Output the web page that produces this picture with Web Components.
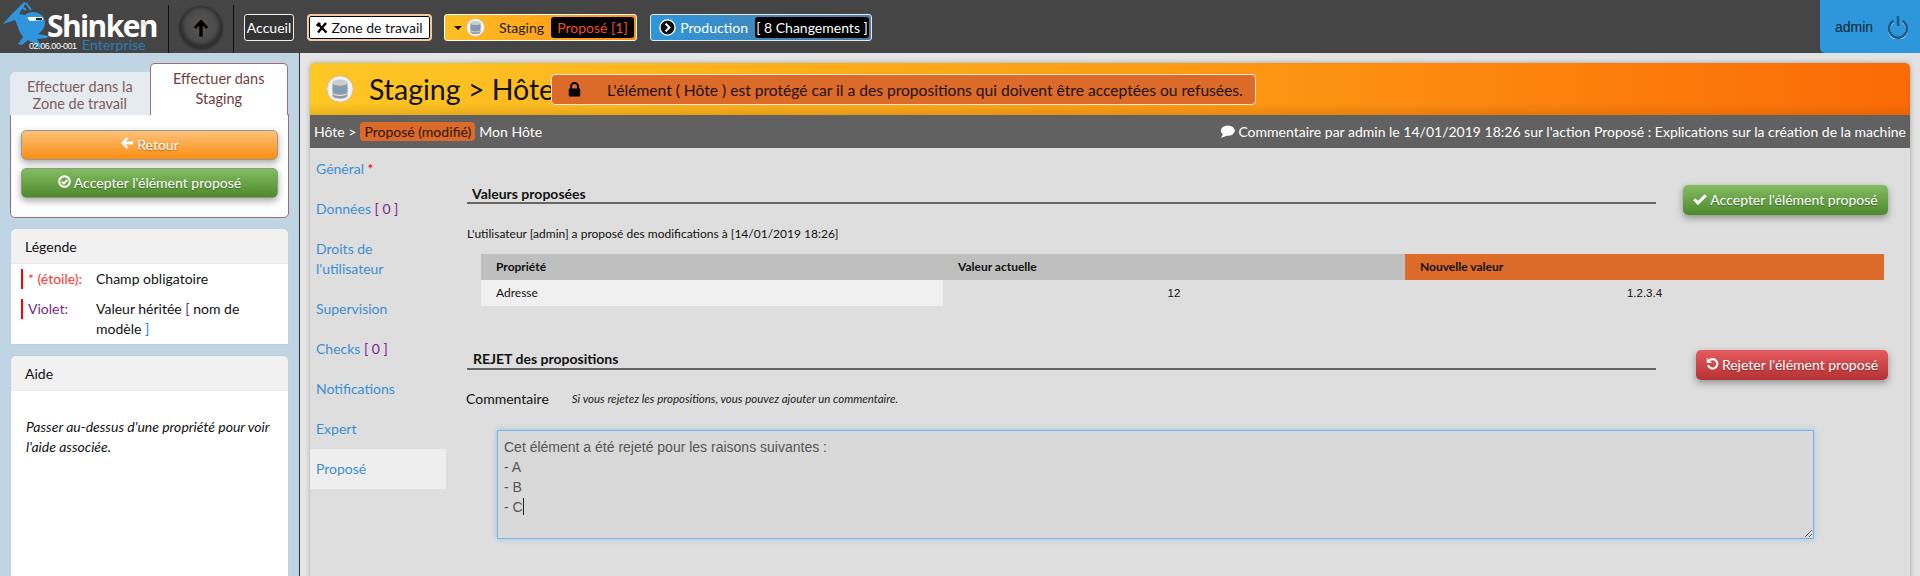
<!DOCTYPE html>
<html lang="fr">
<head>
<meta charset="utf-8">
<title>Shinken</title>
<style>
html,body{margin:0;padding:0;height:576px;overflow:hidden;background:#e2e2e2;font-family:Lato,"Liberation Sans",sans-serif;font-size:14px;color:#111}
sk-app{height:576px}
</style>
</head>
<body>
<sk-app>
  <sk-topbar slot="top"></sk-topbar>
  <sk-sidebar slot="side"></sk-sidebar>
  <sk-main slot="main"></sk-main>
</sk-app>
<script>
function def(name, css, html){
  customElements.define(name, class extends HTMLElement{
    constructor(){super();this.attachShadow({mode:'open'}).innerHTML='<style>'+css+'</style>'+html;}
  });
}
const ICONS={
 left:'<svg width="14" height="14" viewBox="0 0 14 14"><path d="M6.6 1.2 1 7l5.6 5.8 1.6-1.6L5.5 8.5H13v-3H5.5l2.7-2.7z" fill="currentColor"/></svg>',
 ccheck:'<svg width="13" height="13" viewBox="0 0 13 13"><circle cx="6.5" cy="6.5" r="5.3" fill="none" stroke="currentColor" stroke-width="2"/><path d="M3.8 6.6 5.9 8.6 9.3 4.8" fill="none" stroke="currentColor" stroke-width="1.9"/></svg>',
 check:'<svg width="14" height="12" viewBox="0 0 14 12"><path d="M1.2 6.3 5 10 12.8 2.2" fill="none" stroke="currentColor" stroke-width="3"/></svg>',
 undo:'<svg width="13" height="13" viewBox="0 0 13 13"><path d="M3.4 3.3A4.7 4.7 0 1 1 2 8" fill="none" stroke="currentColor" stroke-width="2.1"/><path d="M.8 .8V6H6z" fill="currentColor"/></svg>',
 comment:'<svg width="15" height="13" viewBox="0 0 15 13"><ellipse cx="7.8" cy="5.6" rx="7" ry="5.2" fill="currentColor"/><path d="M3.4 8.6 1 12.6C3.4 12.4 5.6 11.4 7 10.2z" fill="currentColor"/></svg>',
 lock:'<svg width="13" height="15" viewBox="0 0 13 15"><path d="M3 7V4.4a3.5 3.5 0 0 1 7 0V7" fill="none" stroke="#000" stroke-width="2"/><rect x=".8" y="6.6" width="11.4" height="8" rx="1" fill="#000"/></svg>',
 db:s=>`<svg width="${s}" height="${s}" viewBox="0 0 30 30"><circle cx="15" cy="15" r="14.2" fill="#f2f2f2" stroke="#d8b78a" stroke-width="1"/><ellipse cx="15" cy="8" rx="8" ry="3.2" fill="#c9ced2"/><path d="M7 8v14c0 2 3.6 3.4 8 3.4s8-1.4 8-3.4V8c0 2-3.6 3.2-8 3.2S7 10 7 8z" fill="#8f9aa3"/><path d="M7 12.6c0 2 3.6 3.2 8 3.2s8-1.2 8-3.2v1.6c0 2-3.6 3.2-8 3.2s-8-1.2-8-3.2z" fill="#5aa3d8"/><path d="M7 18c0 2 3.6 3.2 8 3.2s8-1.2 8-3.2v1.4c0 2-3.6 3.2-8 3.2s-8-1.2-8-3.2z" fill="#dde3e8"/></svg>`
};

def('sk-app',`:host{display:grid;grid-template-columns:300px 1fr;grid-template-rows:53px 523px;width:1920px;overflow:hidden}
 ::slotted([slot=top]){grid-column:1 / 3}`,
 `<slot name="top"></slot><slot name="side"></slot><slot name="main"></slot>`);

def('sk-logo',`:host{display:block;position:relative;width:168px;height:53px;flex:none;color:#fff}
 svg{position:absolute;left:2px;top:1px}
 .n{position:absolute;left:47px;top:8px;font:700 30px/36px "Open Sans","Liberation Sans",sans-serif;letter-spacing:-1.6px}
 .tm{position:absolute;left:140px;top:20px;font:5px/8px "Liberation Sans",sans-serif;color:#bbb}
 .v{position:absolute;left:29px;top:41px;font:9px/11px "Liberation Sans",sans-serif;letter-spacing:-.45px}
 .e{position:absolute;left:82px;top:37px;font:14px/15px Lato,sans-serif;color:#2a7cb5;letter-spacing:.1px}`,
 `<svg width="56" height="50" viewBox="0 0 56 50"><path d="M22 1 9 14 1 23l12-4 3 7c1 5 4 8 5 10l-5 7 4 1 6-5 5 3 6 5 3-1-5-8 10-1 1-2-10-2c3-2 7-6 7-11 0-7-6-11-12-11-3 0-6 1-8 3L17 13 24 2z" fill="#2f96dd"/><path d="M26 16h13c2 0 3 2 2 3l-12 1c-2 0-4-3-3-4z" fill="#fff"/><path d="M34 17h6v2h-6z" fill="#123"/><path d="M19 5l5 4M24 2l5 7" stroke="#2f96dd" stroke-width="2"/></svg>
 <span class="n">Shinken</span><span class="tm">TM</span><span class="v">02.06.00-001</span><span class="e">Enterprise</span>`);

def('sk-up',`:host{display:flex;align-items:center;justify-content:center;flex:none;width:66px;height:48px;margin-top:5px;border:solid #111;border-width:0 1px;box-sizing:border-box}
 i{display:flex;align-items:center;justify-content:center;width:44px;height:44px;margin-top:-3px;border-radius:50%;background:radial-gradient(circle at 50% 45%,#585858 0,#4a4a4a 48%,#2f2f2f 62%,#3a3a3a 100%);box-shadow:0 0 2px #333}`,
 `<i><svg width="20" height="22" viewBox="0 0 20 22"><path d="M10 2 2.5 10 5 12.3 8 9v11h4V9l3 3.3 2.5-2.3z" fill="#000" stroke="#6b5a4a" stroke-width=".5"/></svg></i>`);

def('sk-nav-pill',`:host{display:flex;align-items:center;box-sizing:border-box;height:27px;flex:none;font:14px/20px Lato,sans-serif;border-radius:3px;border:1px solid #eee}
 :host([kind=home]){width:50px;justify-content:center;background:#333;color:#fff;margin-left:10px}
 :host([kind=zone]){width:125px;margin-left:13px;justify-content:center;gap:3px;background:#fff;color:#111;border:2px solid #f5c99e;box-shadow:inset 0 0 0 1px #000;border-radius:4px}
 :host([kind=stag]){width:193px;margin-left:12px;background:linear-gradient(90deg,#fdc024,#ff8c10);color:#222;border-color:#fff;padding:2px;justify-content:flex-end}
 :host([kind=prod]){width:222px;margin-left:13px;background:linear-gradient(90deg,#2f96da,#4d7ca2);color:#fff;border-color:#e8e8e8;padding:2px;justify-content:flex-end}`,
 `<slot></slot>`);

def('sk-blackbox',`:host{display:flex;align-items:center;justify-content:center;height:100%;background:#000;border-radius:3px;box-sizing:border-box;font:14px/20px Lato,sans-serif}`,`<slot></slot>`);

def('sk-user',`:host{display:flex;align-items:center;box-sizing:border-box;width:100px;height:53px;margin-left:auto;padding-left:15px;gap:14px;background:#2e96da;border-bottom-left-radius:5px;font:14px/20px "Liberation Sans",sans-serif;color:#0d2638}`,
 `<span>admin</span><svg width="22" height="24" viewBox="0 0 22 24"><path d="M6.5 6A9 9 0 1 0 15.5 6" fill="none" stroke="#a9d4ef" stroke-width="2.4" transform="translate(0 1)"/><path d="M6.5 6A9 9 0 1 0 15.5 6" fill="none" stroke="#1d5a86" stroke-width="2.4"/><path d="M11 1v10" stroke="#1d5a86" stroke-width="2.4"/></svg>`);

def('sk-topbar',`:host{display:flex;align-items:flex-start;height:53px;background:#454545}
 .row{display:flex;align-items:center;height:27px;margin-top:14px}
 .caret{width:0;height:0;border:4px solid transparent;border-top-color:#111;border-bottom:0;margin:0 4px 0 0}
 .lab{margin:0 0 0 0}`,
 `<sk-logo></sk-logo><sk-up></sk-up>
 <div class="row">
  <sk-nav-pill kind="home">Accueil</sk-nav-pill>
  <sk-nav-pill kind="zone"><svg width="12" height="12" viewBox="0 0 12 12"><path d="M1.5 1.5 10.5 10.5M10 1 2 10.5" stroke="#000" stroke-width="2.4"/><path d="M0 3l3-3 2 2-3 3z" fill="#000"/></svg><span>Zone de travail</span></sk-nav-pill>
  <sk-nav-pill kind="stag"><span class="caret"></span><span style="display:flex;margin-right:14px">${ICONS.db(19)}</span><span style="margin-right:7px">Staging</span><sk-blackbox style="width:83px;color:#f0501e">Proposé [1]</sk-blackbox></sk-nav-pill>
  <sk-nav-pill kind="prod"><svg width="17" height="17" viewBox="0 0 17 17" style="margin-right:4px"><circle cx="8.5" cy="8.5" r="7.6" fill="#111" stroke="#fff" stroke-width="1.4"/><path d="M6.6 4.6 10.4 8.5 6.6 12.4" fill="none" stroke="#fff" stroke-width="2"/></svg><span style="margin-right:7px">Production</span><sk-blackbox style="width:114px;color:#fff">[ 8 Changements ]</sk-blackbox></sk-nav-pill>
 </div>
 <sk-user></sk-user>`);

def('sk-btn',`:host{display:flex;align-items:center;justify-content:center;gap:3px;box-sizing:border-box;height:30px;border-radius:5px;font:14px/20px Lato,sans-serif;color:#fff;text-shadow:0 1px 1px rgba(0,0,0,.35);box-shadow:0 3px 7px rgba(0,0,0,.35)}
 :host([c=orange]){background:linear-gradient(#fcc27a,#fb8e12);border:1px solid #999}
 :host([c=green]){background:linear-gradient(#84bc62,#4e892d);border:1px solid #8a9a80}
 :host([c=greenb]){background:linear-gradient(#84bc62,#4e892d)}
 :host([c=red]){background:linear-gradient(#e65c5f,#b33133)}
 span{display:flex}`,
 `<span><slot name="i"></slot></span><slot></slot>`);

def('sk-card',`:host{display:block;background:#fff;border-radius:5px 5px 0 0;box-shadow:0 0 1px rgba(0,0,0,.25);margin-left:11px;width:277px;font:14px/20px Lato,sans-serif;color:#111}
 header{height:35px;line-height:35px;padding-left:14px;background:#f1f1f1;border-radius:5px 5px 0 0;border-bottom:1px solid #eaeaea;box-sizing:border-box;font-size:14px}`,
 `<header><slot name="t"></slot></header><slot></slot>`);

def('sk-legend-row',`:host{display:grid;grid-template-columns:75px 1fr;margin-left:10px;padding-left:0;font:14px/20px Lato,sans-serif}
 .k{display:block;border-left:2px solid #f00;padding-left:5px;height:20px;color:var(--c)}
 .v{padding-right:10px}`,
 `<div class="k"><slot name="k"></slot></div><div class="v"><slot></slot></div>`);

def('sk-sidebar',`:host{display:block;box-sizing:border-box;width:300px;height:523px;background:#c0d5e3;border-right:1px solid #333;padding-top:10px;overflow:hidden}
 .tabs{display:flex;align-items:flex-end;margin-left:10px;width:278px;height:52px;position:relative;z-index:1}
 .t{box-sizing:border-box;text-align:center;font:14.5px/17px Lato,sans-serif}
 .t0{width:140px;height:43px;background:#e6ebef;border-radius:5px 0 0 0;color:#7d5c60;padding-top:6px}
 .t1{width:139px;height:52px;background:#fff;border:1px solid #a56a6e;border-bottom:0;border-radius:5px 5px 0 0;color:#6f3f42;line-height:20px;padding-top:5px}
 .pane{box-sizing:border-box;margin:-1px 0 0 10px;width:279px;height:104px;background:#fff;border:1px solid #a56a6e;border-radius:0 0 5px 5px;padding:15px 10px;display:flex;flex-direction:column;gap:8px}
 .leg{padding:5px 0;display:flex;flex-direction:column;gap:10px}
 sk-card.a{margin-top:11px}sk-card.b{margin-top:12px;height:240px}
 .help{margin:26px 15px 0;font-style:italic}
 .r{color:#f33}.p{color:#7d1f8e}`,
 `<div class="tabs"><div class="t t0">Effectuer dans la Zone de travail</div><div class="t t1">Effectuer dans Staging</div></div>
 <div class="pane">
  <sk-btn c="orange"><span slot="i">${ICONS.left}</span>Retour</sk-btn>
  <sk-btn c="green"><span slot="i">${ICONS.ccheck}</span>Accepter l'élément proposé</sk-btn>
 </div>
 <sk-card class="a"><span slot="t">Légende</span>
  <div class="leg">
   <sk-legend-row style="--c:#f33"><span slot="k">* (étoile):</span>Champ obligatoire</sk-legend-row>
   <sk-legend-row style="--c:#7d1f8e"><span slot="k">Violet:</span>Valeur héritée <span class="p">[</span> nom de modèle <span style="color:#2e86c8">]</span></sk-legend-row>
  </div>
 </sk-card>
 <sk-card class="b"><span slot="t">Aide</span><div class="help">Passer au-dessus d'une propriété pour voir l'aide associée.</div></sk-card>`);

def('sk-head',`:host{display:flex;align-items:center;height:52px;box-sizing:border-box;padding-left:16px;border-radius:5px 5px 0 0;background:linear-gradient(rgba(0,0,0,0) 78%,rgba(120,60,0,.16)),linear-gradient(90deg,#fdc724,#fd9a14 55%,#fb6a06);color:#111}
 .ic{display:flex;margin-right:15px}
 h1{margin:0;font:400 28.5px/36px Lato,sans-serif;width:182px;white-space:nowrap}
 .prot{display:flex;align-items:center;box-sizing:border-box;width:705px;height:31px;background:#dc6a28;border:1px solid #f5e6d4;border-radius:4px;margin-top:1px;padding-left:16px;font:15.6px/20px Lato,sans-serif;color:#1c1208;white-space:nowrap}
 .prot svg{margin-right:26px}`,
 `<span class="ic">${ICONS.db(28)}</span><h1>Staging &gt; Hôte</h1><div class="prot">${ICONS.lock}L'élément ( Hôte ) est protégé car il a des propositions qui doivent être acceptées ou refusées.</div>`);

def('sk-crumb',`:host{display:flex;align-items:center;justify-content:space-between;height:33px;box-sizing:border-box;padding:0 4px;background:#616161;color:#fff;font:14px/20px Lato,sans-serif}
 .l{display:flex;align-items:center}
 b{font-weight:400;background:#dc6a28;color:#2a1608;border-radius:4px;padding:0 4px;height:19px;line-height:19px;margin:0 4px 0 4px}
 .r{display:flex;align-items:center;gap:3px}`,
 `<div class="l"><span>Hôte &gt;</span><b>Proposé (modifié)</b><span>Mon Hôte</span></div>
 <div class="r">${ICONS.comment}<span>Commentaire par admin le 14/01/2019 18:26 sur l'action Proposé : Explications sur la création de la machine</span></div>`);

def('sk-tabs',`:host{display:block;width:136px;flex:none;padding-top:1px;font:14px/20px Lato,sans-serif;color:#3c8fd1}
 div{padding:10px 6px}
 .on{background:#eeeeee}
 .r{color:#f00}.p{color:#7d1f8e}`,
 `<div>Général <span class="r">*</span></div><div>Données <span class="p">[ 0 ]</span></div><div>Droits de l'utilisateur</div><div>Supervision</div><div>Checks <span class="p">[ 0 ]</span></div><div>Notifications</div><div>Expert</div><div class="on">Proposé</div>`);

def('sk-section-head',`:host{display:flex;align-items:flex-start;justify-content:space-between}
 .t{box-sizing:border-box;width:1189px;border-bottom:2px solid #666;padding-left:var(--p,5px);font:700 14px/var(--lh,17px) Lato,sans-serif;color:#111}
 ::slotted(sk-btn){flex:none}`,
 `<div class="t"><slot name="t"></slot></div><slot></slot>`);

def('sk-prop-table',`:host{display:grid;grid-template-columns:462px 462px 479px;grid-auto-rows:26px;margin:10px 0 0 14px;width:1403px;font:12px/26px Lato,sans-serif;color:#111}
 div{padding-left:15px}
 .h{background:#bfbfbf;font-weight:700}
 .o{background:#dc6a28;font-weight:700}
 .a{background:#f0f0f0}
 .c{text-align:center;padding:0;font:11.5px/26px "Liberation Sans",sans-serif}`,
 `<div class="h">Propriété</div><div class="h">Valeur actuelle</div><div class="o">Nouvelle valeur</div><div class="a">Adresse</div><div class="c">12</div><div class="c">1.2.3.4</div>`);

def('sk-comment-box',`:host{display:block;box-sizing:border-box;width:1317px;height:109px;margin:21px 0 0 30px;padding:6px;background:#d9d9d9;border:1px solid #79b3ec;box-shadow:0 0 6px rgba(82,168,236,.45);font:14px/20px "Liberation Sans",sans-serif;color:#555;white-space:pre-wrap;overflow:auto;resize:both}
 i{display:inline-block;width:1px;height:17px;background:#222;vertical-align:-3px}`,
 `<slot></slot><i></i>`);

def('sk-content',`:host{display:block;flex:1;padding:37px 22px 0 21px;min-width:0}
 .p{font:12px/20px Lato,sans-serif;margin-top:9px;color:#111}
 .s2{margin-top:44px}
 .c{display:flex;align-items:center;margin-top:9px;font:14px/20px Lato,sans-serif;margin-left:-1px}
 .c em{font-size:11.5px;margin-left:23px;color:#222}`,
 `<sk-section-head><span slot="t">Valeurs proposées</span><sk-btn c="greenb" style="width:205px"><span slot="i">${ICONS.check}</span>Accepter l'élément proposé</sk-btn></sk-section-head>
 <div class="p">L'utilisateur [admin] a proposé des modifications à [14/01/2019 18:26]</div>
 <sk-prop-table></sk-prop-table>
 <sk-section-head class="s2" style="--lh:18px;--p:6px"><span slot="t">REJET des propositions</span><sk-btn c="red" style="width:192px"><span slot="i">${ICONS.undo}</span>Rejeter l'élément proposé</sk-btn></sk-section-head>
 <div class="c"><span>Commentaire</span><em>Si vous rejetez les propositions, vous pouvez ajouter un commentaire.</em></div>
 <sk-comment-box>Cet élément a été rejeté pour les raisons suivantes :
- A
- B
- C</sk-comment-box>`);

def('sk-main',`:host{display:block;box-sizing:border-box;height:523px;padding:10px 10px 0 10px;background:#e2e2e2;overflow:hidden;background:linear-gradient(90deg,#e6e6e6,#e2e2e2)}
 .panel{height:600px;background:#dedede;border-radius:5px 5px 0 0;box-shadow:0 0 5px rgba(0,0,0,.3)}
 .body{display:flex}`,
 `<div class="panel"><sk-head></sk-head><sk-crumb></sk-crumb><div class="body"><sk-tabs></sk-tabs><sk-content></sk-content></div></div>`);
</script>
</body>
</html>
